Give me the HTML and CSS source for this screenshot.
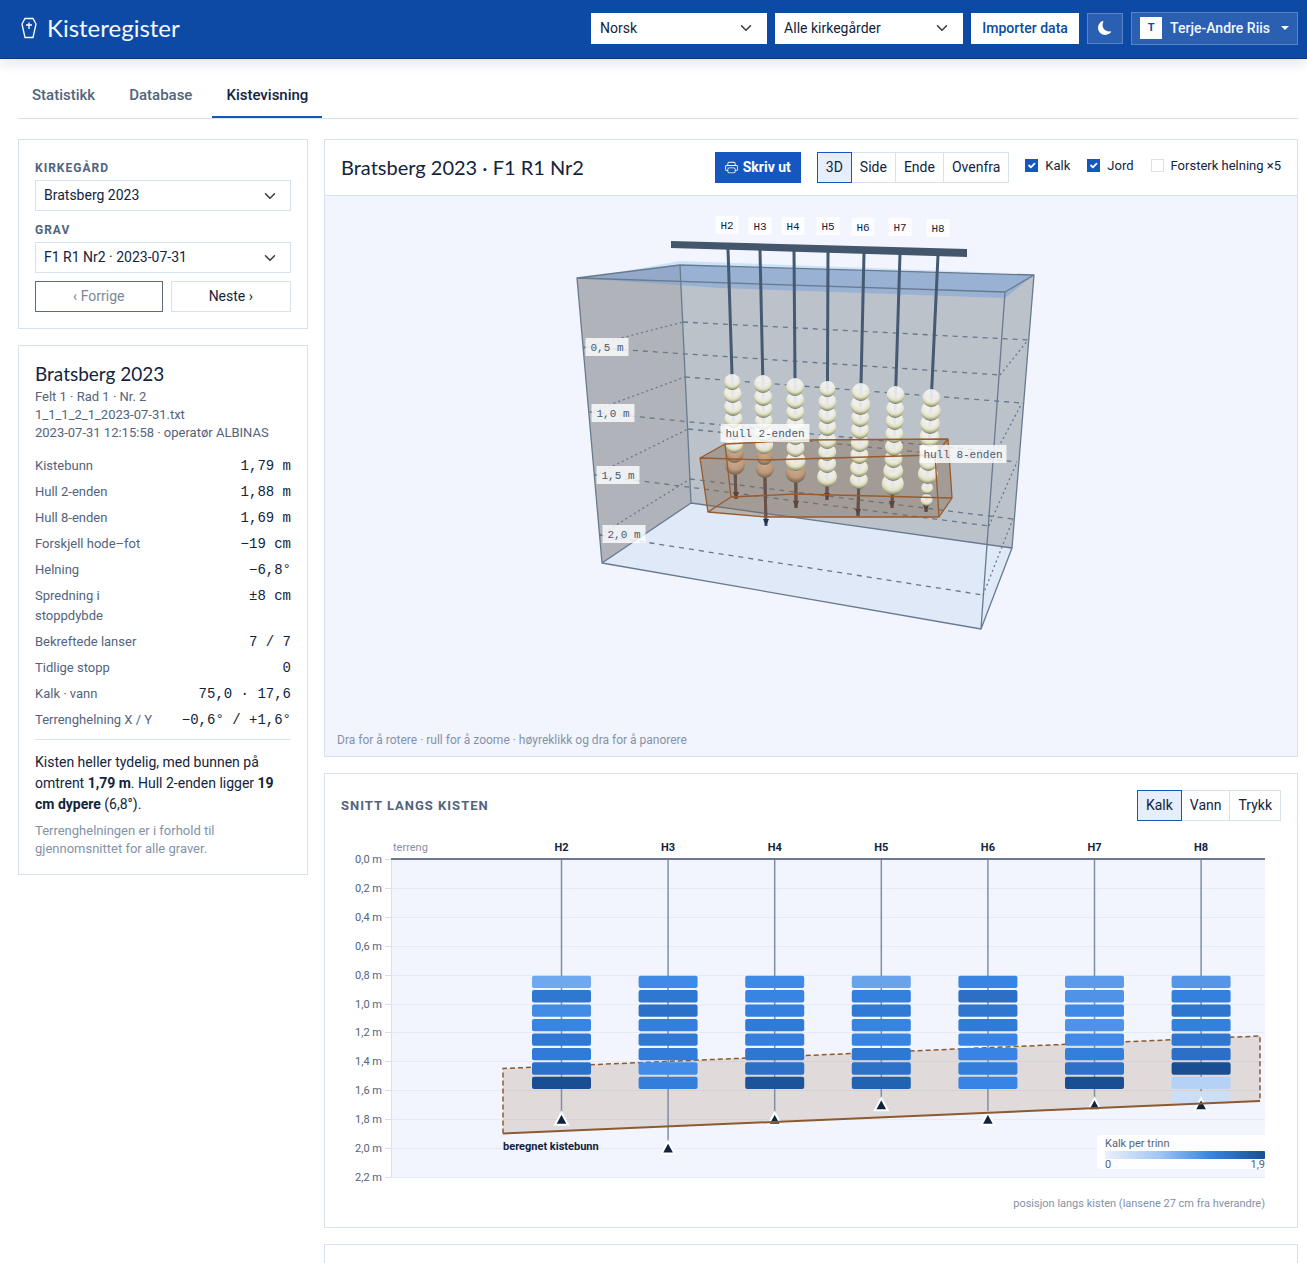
FILE: index.html
```html
<!DOCTYPE html>
<html lang="no">
<head>
<meta charset="utf-8">
<meta name="viewport" content="width=device-width, initial-scale=1">
<title>Kisteregister</title>
<link rel="stylesheet" href="styles.css">
</head>
<body>
<header class="topbar">
  <a class="brand" href="#">
    <svg class="brand-icon" viewBox="0 0 16 22" aria-hidden="true">
      <path d="M4 1.5h8l3 5.5-3 13.5H4L1 7z"/>
      <path d="M8 5.5v6.500M5 8h6"/>
    </svg>
    <span>Kisteregister</span>
  </a>
  <div class="topbar-tools">
    <select class="select select-lang" aria-label="Språk"><option>Norsk</option></select>
    <select class="select select-site" aria-label="Kirkegård"><option>Alle kirkegårder</option></select>
    <button class="btn btn-import" type="button">Importer data</button>
    <button class="btn btn-glass btn-theme" type="button" aria-label="Mørk modus">
      <svg viewBox="0 0 16 16" aria-hidden="true"><path d="M6 .278a.77.77 0 0 1 .08.858 7.2 7.2 0 0 0-.878 3.46c0 4.021 3.278 7.277 7.318 7.277q.792-.001 1.533-.16a.79.79 0 0 1 .81.316.73.73 0 0 1-.031.893A8.35 8.350 0 0 1 8.344 16C3.734 16 0 12.286 0 7.710 0 4.266 2.114 1.312 5.124.06A.75.75 0 0 1 6 .278"/></svg>
    </button>
    <button class="btn btn-glass btn-user" type="button">
      <span class="avatar">T</span><span>Terje-Andre Riis</span><span class="caret"></span>
    </button>
  </div>
</header>

<div class="page">
  <nav class="tabs">
    <a class="tab" href="#statistikk">Statistikk</a>
    <a class="tab" href="#database">Database</a>
    <a class="tab is-active" href="#kistevisning" aria-current="page">Kistevisning</a>
  </nav>

  <div class="layout">
    <aside class="side">
      <section class="panel panel-pad">
        <label class="label" for="kirkegard">Kirkegård</label>
        <select class="select" id="kirkegard"><option>Bratsberg 2023</option></select>
        <label class="label label-next" for="grav">Grav</label>
        <select class="select" id="grav"><option>F1 R1 Nr2 · 2023-07-31</option></select>
        <div class="pager">
          <button class="btn" type="button" disabled>‹ Forrige</button>
          <button class="btn" type="button">Neste ›</button>
        </div>
      </section>

      <section class="panel panel-pad">
        <h2 class="grave-title">Bratsberg 2023</h2>
        <p class="meta">Felt 1 · Rad 1 · Nr. 2</p>
        <p class="meta">1_1_1_2_1_2023-07-31.txt</p>
        <p class="meta">2023-07-31 12:15:58 · operatør ALBINAS</p>
        <dl class="facts">
          <dt>Kistebunn</dt><dd>1,79 m</dd>
          <dt>Hull 2-enden</dt><dd>1,88 m</dd>
          <dt>Hull 8-enden</dt><dd>1,69 m</dd>
          <dt>Forskjell hode–fot</dt><dd>−19 cm</dd>
          <dt>Helning</dt><dd>−6,8°</dd>
          <dt>Spredning i stoppdybde</dt><dd>±8 cm</dd>
          <dt>Bekreftede lanser</dt><dd>7 / 7</dd>
          <dt>Tidlige stopp</dt><dd>0</dd>
          <dt>Kalk · vann</dt><dd>75,0 · 17,6</dd>
          <dt>Terrenghelning X / Y</dt><dd>−0,6° / +1,6°</dd>
        </dl>
        <p class="summary">Kisten heller tydelig, med bunnen på omtrent <strong>1,79 m</strong>. Hull 2-enden ligger <strong>19 cm dypere</strong> (6,8°).</p>
        <p class="note">Terrenghelningen er i forhold til gjennomsnittet for alle graver.</p>
      </section>
    </aside>

    <main class="main">
      <section class="panel">
        <div class="viewer-head">
          <h1 class="viewer-title">Bratsberg 2023 · F1 R1 Nr2</h1>
          <div class="viewer-tools">
            <button class="btn btn-print" type="button">
              <svg viewBox="0 0 16 16" aria-hidden="true"><path d="M2.500 8a.5.5 0 1 0 0-1 .5.5 0 0 0 0 1"/><path d="M5 1a2 2 0 0 0-2 2v2H2a2 2 0 0 0-2 2v3a2 2 0 0 0 2 2h1v1a2 2 0 0 0 2 2h6a2 2 0 0 0 2-2v-1h1a2 2 0 0 0 2-2V7a2 2 0 0 0-2-2h-1V3a2 2 0 0 0-2-2zM4 3a1 1 0 0 1 1-1h6a1 1 0 0 1 1 1v2H4zm1 5a2 2 0 0 0-2 2v1H2a1 1 0 0 1-1-1V7a1 1 0 0 1 1-1h12a1 1 0 0 1 1 1v3a1 1 0 0 1-1 1h-1v-1a2 2 0 0 0-2-2zm7 2v3a1 1 0 0 1-1 1H5a1 1 0 0 1-1-1v-3a1 1 0 0 1 1-1h6a1 1 0 0 1 1 1"/></svg>
              <span>Skriv ut</span>
            </button>
            <div class="segmented" role="group" aria-label="Visning">
              <button class="btn is-active" type="button">3D</button>
              <button class="btn" type="button">Side</button>
              <button class="btn" type="button">Ende</button>
              <button class="btn" type="button">Ovenfra</button>
            </div>
            <div class="checks">
              <label class="check"><input type="checkbox" checked><span>Kalk</span></label>
              <label class="check"><input type="checkbox" checked><span>Jord</span></label>
              <label class="check"><input type="checkbox"><span>Forsterk helning ×5</span></label>
            </div>
          </div>
        </div>
        <div class="viewer">
          <svg class="scene" id="scene" viewBox="325 196 972 560" role="img" aria-label="Tredimensjonal visning av kisten">
            <defs>
              <radialGradient id="chalk" cx=".5" cy=".28" r=".74">
                <stop offset="0" stop-color="#fafafa" stop-opacity=".86"/><stop offset=".5" stop-color="#f0f0ea" stop-opacity=".94"/>
                <stop offset=".7" stop-color="#dfe0bd"/><stop offset=".86" stop-color="#a9aa8b"/><stop offset="1" stop-color="#5b5e4e"/>
              </radialGradient>
              <radialGradient id="soil" cx=".5" cy=".28" r=".74">
                <stop offset="0" stop-color="#cfac92"/><stop offset=".6" stop-color="#bd9a7c"/><stop offset="1" stop-color="#6f5c49"/>
              </radialGradient>
            </defs>
            <!-- soil volume -->
            <path class="floor" d="M602 563 691 503 1012 548 981 629z"/>
            <path class="wall" d="M680 265 1034 275 1012 548 691 503z"/>
            <path class="wall-left" d="M577 278 680 265 691 503 602 563z"/>
            <path class="terrain-glow" d="M620 272 680 261 1034 274 680 265z"/>
            <path class="terrain" d="M577 278 680 265 1034 275 1005 298 720 288z"/>
            <g class="depth">
              <path d="M683 322 1028 340M685 377 1022 403M688 429 1017 462M690 479 1013 519"/>
              <path d="M583 347 1000 375M590 412 996 452M595 475 989 526M600 535 983 595"/>
              <path class="depth-side" d="M583 348 683 322M590 412 685 377M595 475 688 429M600 535 690 479M1000 375 1028 340M996 452 1022 403M989 526 1017 462M983 595 1013 519"/>
            </g>
            <path class="edges" d="M577 278 680 265 1034 275 1005 292zM577 278 602 563 981 629 1005 292M981 629 1012 548 1034 275M680 265 691 503 602 563M691 503 1012 548"/>
            <g id="rods"></g>
            <path class="rail" d="M671 241 967 249 967 257 671 248z"/>
            <path class="coffin" d="M700 458 725 444 805 440 948 439 952 498 939 517 765 517 708 512z"/>
            <g id="beads"></g>
            <path class="coffin-edges" d="M700 458 765 460 935 455 948 439 805 440 725 444zM708 512 765 517 939 517 952 498 796 494 731 497zM700 458 708 512M725 444 731 497M935 455 939 517M948 439 952 498"/>
            <g id="tags"></g>
          </svg>
          <p class="hint">Dra for å rotere · rull for å zoome · høyreklikk og dra for å panorere</p>
        </div>
      </section>

      <section class="panel panel-pad">
        <div class="chart-head">
          <h2 class="chart-title">Snitt langs kisten</h2>
          <div class="segmented" role="group" aria-label="Måling">
            <button class="btn is-active" type="button">Kalk</button>
            <button class="btn" type="button">Vann</button>
            <button class="btn" type="button">Trykk</button>
          </div>
        </div>
        <svg class="chart" id="chart" viewBox="0 0 940 374" role="img" aria-label="Kalk per trinn langs kisten">
          <defs>
            <linearGradient id="ramp">
              <stop offset="0" stop-color="#eaf0fb"/><stop offset=".33" stop-color="#a5c7f4"/>
              <stop offset=".66" stop-color="#3784e4"/><stop offset="1" stop-color="#1a4e93"/>
            </linearGradient>
          </defs>
        </svg>
      </section>

      <section class="panel panel-next"></section>
    </main>
  </div>
</div>
<script src="app.js"></script>
</body>
</html>
```
FILE: app.js
```js
const NS = 'http://www.w3.org/2000/svg';

function add(parent, name, attrs, text) {
  const el = document.createElementNS(NS, name);
  for (const key in attrs) el.setAttribute(key, attrs[key]);
  if (text !== undefined) el.textContent = text;
  parent.appendChild(el);
  return el;
}

/* ---- 3D scene: lances, chalk beads and labels ---- */
const lances = [
  { top: [728, 249], tip: [736, 499], tag: [727, 225], beads: [[382, 8], [394, 9], [407, 9], [419, 9], [431, 9], [444, 9], [454, 9, 1], [465, 10, 1]] },
  { top: [760, 250], tip: [766, 526], tag: [760, 226], beads: [[384, 9], [397, 9], [409, 9], [421, 9], [433, 9], [445, 9], [457, 8, 1], [469, 9, 1]] },
  { top: [794, 250], tip: [796, 508], tag: [793, 226], beads: [[387, 9], [400, 9], [412, 9], [424, 9], [436, 9], [448, 9], [461, 10], [473, 10, 1]] },
  { top: [828, 252], tip: [827, 500], tag: [828, 226], beads: [[389, 8], [402, 9], [415, 9], [427, 9], [440, 9], [452, 9], [464, 9], [477, 10]] },
  { top: [864, 253], tip: [858, 516], tag: [863, 227], beads: [[392, 9], [405, 10], [418, 9], [430, 9], [443, 9], [455, 9], [468, 9], [480, 9]] },
  { top: [900, 254], tip: [892, 508], tag: [900, 227], beads: [[395, 9], [409, 9], [421, 9], [434, 9], [447, 9], [459, 9], [471, 10], [484, 11]] },
  { top: [938, 255], tip: [926, 512], tag: [938, 228], beads: [[398, 9], [411, 10], [424, 10], [437, 10], [450, 9], [462, 9], [474, 10], [488, 6], [500, 6]] }
];
const rods = document.getElementById('rods');
const beads = document.getElementById('beads');
const tags = document.getElementById('tags');

function tag(x, y, width, text, cls) {
  add(tags, 'rect', { x: x - width / 2, y: y - 9, width, height: 18, class: 'tag-box' });
  add(tags, 'text', { x, y: y + 4, class: 'tag ' + (cls || '') }, text);
}

lances.forEach((l, i) => {
  const at = y => l.top[0] + (l.tip[0] - l.top[0]) * (y - l.top[1]) / (l.tip[1] - l.top[1]);
  add(rods, 'line', { x1: l.top[0], y1: l.top[1], x2: l.tip[0], y2: l.tip[1], class: 'rod' });
  const end = Math.min(l.tip[1], 517);
  add(beads, 'line', { x1: at(455), y1: 455, x2: at(end), y2: end, class: 'rod-deep' });
  const deep = l.tip[1] > 517 ? 'tip' : 'tip tip-deep';
  add(beads, 'path', { d: `M${l.tip[0] - 3} ${l.tip[1] - 7}h6l-3 7z`, class: deep });
  /* lowest first, so that each bead's shaded rim lies over the one below it */
  l.beads.slice().reverse().forEach(([y, r, soil]) => {
    add(beads, 'circle', { cx: at(y), cy: y, r, fill: soil ? 'url(#soil)' : 'url(#chalk)' });
  });
  tag(l.tag[0], l.tag[1], 23, 'H' + (i + 2), 'tag-dark');
});
tag(607, 347, 43, '0,5 m');
tag(613, 413, 43, '1,0 m');
tag(618, 475, 43, '1,5 m');
tag(624, 534, 43, '2,0 m');
tag(765, 433, 89, 'hull 2-enden');
tag(963, 454, 87, 'hull 8-enden');

/* ---- Section along the coffin ---- */
const chart = document.getElementById('chart');
const plot = { left: 50, right: 924, top: 22, bottom: 340 };
const depthY = m => plot.top + m / 2.2 * (plot.bottom - plot.top);
const lanceX = i => 220.5 + i * 106.6;
const columns = [
  { stop: 1.8, steps: ['#6ea8ee', '#2f78d1', '#428ce6', '#3784e2', '#2f78d3', '#317bd7', '#2c71c9', '#1a4e93'] },
  { stop: 2.0, steps: ['#3f8ae6', '#2f78d1', '#2b70c8', '#347fdd', '#2f78d3', '#327cd9', '#428ce8', '#337edb'] },
  { stop: 1.8, steps: ['#3f8ae6', '#3784e2', '#3480df', '#317bd8', '#3580de', '#2f76d0', '#2c70c7', '#1c539b'] },
  { stop: 1.7, steps: ['#69a3ec', '#3380de', '#3079d4', '#3683e0', '#3784e2', '#2f78d1', '#2d71c9', '#2163b0'] },
  { stop: 1.8, steps: ['#3784e2', '#2c6fc5', '#2f76cf', '#317bd8', '#3784e4', '#3784e4', '#337edb', '#3784e4'] },
  { stop: 1.7, steps: ['#5c9aeb', '#4f93e8', '#408ae7', '#4f93e8', '#408be8', '#337fdc', '#2d71c9', '#1a4e93'] },
  { stop: 1.7, steps: ['#5596e8', '#3480df', '#2d75cd', '#3480dd', '#2f76d0', '#2b6fc7', '#1a4e93', '#b5d1f5', '#cadff7'] }
];

add(chart, 'rect', { x: plot.left, y: plot.top, width: plot.right - plot.left, height: plot.bottom - plot.top, class: 'plot' });
for (let i = 0; i <= 11; i++) {
  const y = Math.round(depthY(i * 0.2)) + 0.5;
  add(chart, 'line', { x1: plot.left, y1: y, x2: plot.right, y2: y, class: 'grid' });
  add(chart, 'line', { x1: plot.left - 6, y1: y, x2: plot.left, y2: y, class: 'tick' });
  add(chart, 'text', { x: 41, y: y + 3.500, class: 'axis' }, (i * 0.2).toFixed(1).replace('.', ',') + ' m');
}
add(chart, 'line', { x1: 50.5, y1: plot.top, x2: 50.5, y2: plot.bottom, class: 'tick' });
add(chart, 'path', { d: 'M162 231.5 919 199V264L162 296.5z', class: 'box-fill' });
add(chart, 'path', { d: 'M162 296.5V231.5L919 199V264', class: 'box-top' });

columns.forEach((c, i) => {
  add(chart, 'line', { x1: lanceX(i), y1: plot.top, x2: lanceX(i), y2: depthY(c.stop), class: 'lance' });
  add(chart, 'text', { x: lanceX(i), y: 14, class: 'lance-name' }, 'H' + (i + 2));
  c.steps.forEach((fill, s) => {
    add(chart, 'rect', { x: lanceX(i) - 29.5, y: depthY(0.8 + s * 0.1) + 1, width: 59, height: 12.3, rx: 2, fill });
  });
});
columns.forEach((c, i) => {
  const x = lanceX(i), y = depthY(c.stop);
  add(chart, 'path', { d: `M${x - 6.5} ${y + 5.5}h13l-6.500-12z`, class: 'stop' });
});
add(chart, 'line', { x1: 50, y1: 22, x2: 924, y2: 22, class: 'ground' });
add(chart, 'line', { x1: 162, y1: 296.5, x2: 919, y2: 264, class: 'bottom' });
add(chart, 'text', { x: 52, y: 14, class: 'faint' }, 'terreng');
add(chart, 'text', { x: 162, y: 313, class: 'bottom-name' }, 'beregnet kistebunn');
add(chart, 'path', { d: 'M924 298H760a4 4 0 0 0-4 4v26a4 4 0 0 0 4 4H924z', class: 'legend' });
add(chart, 'rect', { x: 764, y: 314, width: 160, height: 8, rx: 1, fill: 'url(#ramp)' });
add(chart, 'text', { x: 764, y: 310, class: 'legend-text' }, 'Kalk per trinn');
add(chart, 'text', { x: 764, y: 331, class: 'legend-text' }, '0');
add(chart, 'text', { x: 924, y: 331, class: 'legend-text end' }, '1,9');
add(chart, 'text', { x: 924, y: 370, class: 'faint end' }, 'posisjon langs kisten (lansene 27 cm fra hverandre)');
```
FILE: styles.css
```css
:root {
  --ink: #12243d;
  --muted: #52647d;
  --faint: #8492a8;
  --line: #d8e2ee;
  --primary: #1556c0;
  --bar: #0d4aa5;
  --surface: #f2f5fd;
  --sans: Roboto, "Liberation Sans", sans-serif;
  --display: Lato, "Liberation Sans", sans-serif;
  --mono: "Liberation Mono", monospace;
}
* { box-sizing: border-box; }
body { margin: 0; background: #fff; color: var(--ink); font: 14px/21px var(--sans); }
h1, h2, p, dl, dd { margin: 0; }

.topbar {
  display: flex; align-items: center; justify-content: space-between;
  height: 59px; padding: 0 9px 2px 18px;
  background: var(--bar); border-bottom: 1px solid #0a3a85;
  box-shadow: 0 4px 12px rgba(16, 36, 80, .12);
}
.brand { display: flex; align-items: center; gap: 10px; padding-left: 3px; color: #f3f7ff; font: 24px/30px var(--display); text-decoration: none; }
.brand-icon { width: 16px; height: 22px; fill: none; stroke: #fff; stroke-width: 1.3; }
.topbar-tools { display: flex; align-items: center; gap: 8px; }

.select {
  display: block; width: 100%; height: 31px; padding: 0 32px 1px 8px;
  appearance: none; border: 1px solid var(--line); border-radius: 0; color: var(--ink);
  font: 14px/20px var(--sans);
  background: #fff url("data:image/svg+xml,%3Csvg xmlns='http://www.w3.org/2000/svg' viewBox='0 0 16 16'%3E%3Cpath fill='none' stroke='%23343a40' stroke-linecap='round' stroke-linejoin='round' stroke-width='2' d='m2 5 6 6 6-6'/%3E%3C/svg%3E") no-repeat right 14px center / 12px 12px;
}
.topbar .select { border-color: #fff; }
.topbar .select-lang { width: 176px; }
.topbar .select-site { width: 188px; }

.btn {
  display: inline-flex; align-items: center; justify-content: center; height: 31px; padding: 0 8px 1px;
  border: 1px solid var(--line); border-radius: 0; background: #fff; color: var(--ink);
  font: 14px/20px var(--sans); white-space: nowrap;
}
.btn:disabled { color: #7b8798; border-color: #5f6b7c; }
.btn-import { width: 108px; border-color: #fff; color: var(--bar); font-weight: 500; }
.btn-glass { background: #2a5fb2; border-color: #5b84c6; color: #f3f7ff; }
.btn-theme { width: 36px; padding: 0; }
.btn-theme svg { width: 14px; height: 14px; fill: #fff; }
.btn-user { gap: 8px; height: 33px; padding-bottom: 0; font-weight: 500; }
.avatar { width: 22px; height: 22px; background: #fff; color: var(--bar); font-size: 11px; line-height: 22px; font-weight: 700; }
.caret { margin-left: 3px; border: 4px solid transparent; border-top-color: #fff; border-bottom: 0; }

.page { padding: 15px 9px 24px 18px; }
.tabs { display: flex; gap: 6px; border-bottom: 1px solid var(--line); }
.tab { height: 44px; padding: 0 14px; border-bottom: 2px solid transparent; color: var(--muted); font-size: 15px; line-height: 42px; font-weight: 500; text-decoration: none; }
.tab.is-active { color: var(--ink); border-bottom-color: var(--primary); }

.layout { display: grid; grid-template-columns: 290px minmax(0, 1fr); gap: 16px; align-items: start; margin-top: 20px; }
.side, .main { display: grid; gap: 16px; }
.panel { border: 1px solid var(--line); background: #fff; }
.panel-pad { padding: 16px; }
.panel-next { height: 120px; }

.label { display: block; color: var(--muted); font-size: 12px; line-height: 24px; font-weight: 700; letter-spacing: 1px; text-transform: uppercase; }
.label-next { margin-top: 7px; }
.pager { display: flex; gap: 8px; margin-top: 8px; }
.pager .btn { flex: 1 1 auto; }

.grave-title { margin-bottom: 2px; font: 19px/24px var(--display); }
.meta { color: var(--muted); font-size: 13px; line-height: 18px; }
.facts { display: grid; grid-template-columns: 1fr auto; gap: 6px 16px; margin-top: 14px; line-height: 20px; }
.facts dt { color: var(--muted); font-size: 13px; }
.facts dd { font-family: var(--mono); font-size: 14px; text-align: right; }
.summary { margin-top: 9px; padding-top: 12px; border-top: 1px solid var(--line); }
.note { margin-top: 7px; color: var(--faint); font-size: 13px; line-height: 18px; }

.viewer-head { display: flex; align-items: center; justify-content: space-between; padding: 12px 16px; border-bottom: 1px solid var(--line); }
.viewer-title { padding-bottom: 2px; font: 20px/28px var(--display); }
.viewer-tools { display: flex; gap: 16px; }
.btn-print { gap: 5px; padding: 0 9px 1px; background: var(--primary); border-color: var(--primary); color: #fff; font-weight: 700; }
.btn-print svg { width: 13px; height: 13px; fill: #fff; }
.segmented { display: flex; }
.segmented .btn + .btn { margin-left: -1px; }
.segmented .is-active { position: relative; border-color: var(--primary); background: #e5eefa; }
.checks { display: flex; gap: 17px; }
.check { display: flex; align-items: center; gap: 7px; height: 27px; font-size: 13px; }
.check input { appearance: none; width: 13px; height: 13px; margin: 0; border: 1px solid var(--line); background: #fff; }
.check input:checked {
  border-color: var(--primary);
  background: var(--primary) url("data:image/svg+xml,%3Csvg xmlns='http://www.w3.org/2000/svg' viewBox='0 0 20 20'%3E%3Cpath fill='none' stroke='%23fff' stroke-linecap='round' stroke-linejoin='round' stroke-width='3' d='m6 10 3 3 6-6'/%3E%3C/svg%3E") center / 12px 12px;
}

.viewer { position: relative; background: var(--surface); }
.scene { display: block; width: 100%; height: 560px; }
.hint { position: absolute; left: 12px; bottom: 5px; color: var(--faint); font-size: 12px; }
.floor { fill: #dfe9f8; }
.wall { fill: #bbc2ca; }
.wall-left { fill: #b0b4ba; }
.terrain { fill: #6b9ce0; fill-opacity: .42; }
.terrain-glow { fill: #cbe2fb; }
.edges { fill: none; stroke: #687a8f; stroke-width: 1.3; stroke-linejoin: round; }
.depth { fill: none; stroke: #66788c; stroke-width: 1.3; stroke-dasharray: 5 5; }
.depth-side { stroke-dasharray: 2 3; }
.rail { fill: #44566c; }
.rod { stroke: #455972; stroke-width: 3; }
.rod-deep { stroke: #6b5149; stroke-width: 3; }
.tip { fill: #22354c; }
.tip-deep { fill: #5a4442; }
.coffin { fill: #84664f; fill-opacity: .42; }
.coffin-edges { fill: none; stroke: #995a2c; stroke-width: 1.3; stroke-linejoin: round; }
.tag-box { fill: #fff; fill-opacity: .8; }
.tag { fill: #465a75; font: 11px var(--mono); text-anchor: middle; }
.tag-dark { fill: var(--ink); }

.chart-head { display: flex; align-items: center; justify-content: space-between; margin-bottom: 16px; }
.chart-title { color: var(--muted); font-size: 13px; line-height: 20px; font-weight: 700; letter-spacing: 1px; text-transform: uppercase; }
.chart { display: block; width: 100%; height: auto; font: 11px var(--sans); }
.plot { fill: var(--surface); }
.grid { stroke: #e4ebf5; }
.tick { stroke: var(--line); }
.axis { fill: var(--muted); text-anchor: end; }
.lance { stroke: #7f8fa5; stroke-width: 1.5; }
.lance-name { fill: var(--ink); font-weight: 700; text-anchor: middle; }
.ground { stroke: #6b7a92; stroke-width: 2; }
.box-fill { fill: #8b5a33; fill-opacity: .17; }
.box-top { fill: none; stroke: #8b5a33; stroke-width: 1.5; stroke-dasharray: 5 3; }
.bottom { stroke: #8b5a33; stroke-width: 2; }
.stop { fill: var(--ink); stroke: #fff; stroke-width: 2; }
.bottom-name { fill: var(--ink); font-weight: 700; }
.legend { fill: #fff; fill-opacity: .9; }
.legend-text { fill: var(--muted); }
.faint { fill: var(--faint); }
.end { text-anchor: end; }
```
